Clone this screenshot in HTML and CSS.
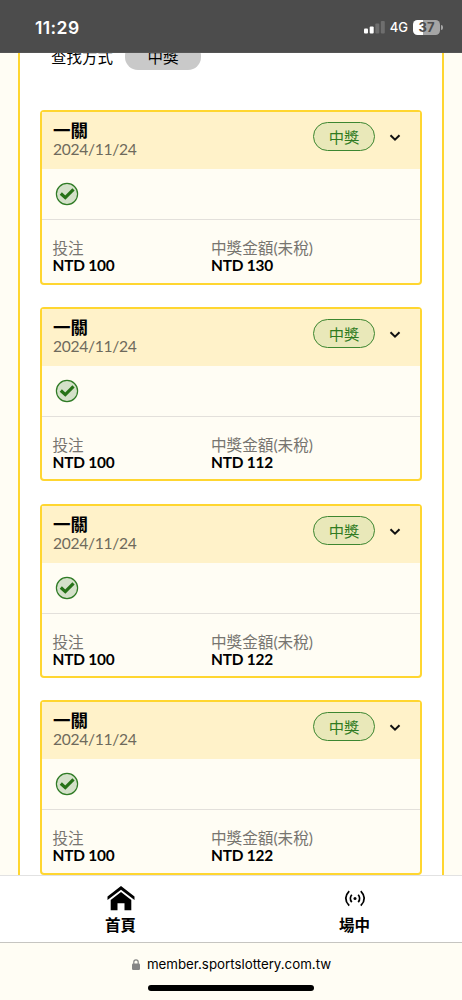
FILE: index.html
```html
<!DOCTYPE html>
<html lang="zh-Hant">
<head>
<meta charset="utf-8">
<meta name="viewport" content="width=device-width, initial-scale=1">
<title>投注紀錄</title>
<link rel="stylesheet" href="styles.css">
</head>
<body>
<header class="status">
  <span class="time">11:29</span>
  <div class="indicators">
    <svg class="signal" width="21" height="14" viewBox="0 0 21 14"><g fill="#fff"><rect x="0" y="8.500" width="4" height="5" rx="1"/><rect x="5.700" y="6.500" width="4" height="7" rx="1"/></g><g fill="#6e6e6e"><rect x="11.300" y="3.500" width="4" height="10" rx="1"/><rect x="16.800" y="1" width="4" height="12.500" rx="1"/></g></svg>
    <span class="network">4G</span>
    <div class="battery"><span class="level">37</span><i class="cap"></i></div>
  </div>
</header>
<main class="page">
  <section class="panel">
    <div class="filter"><span>查找方式</span><span class="chip">中獎</span></div>
    <div class="cards">
      <article class="card">
        <div class="head"><div><h2>一關</h2><p class="date">2024/11/24</p></div><span class="badge">中獎</span><svg class="chevron" width="12" height="8" viewBox="0 0 12 8"><path d="M1.500 1.200L6 5.700L10.500 1.200"/></svg></div>
        <div class="result"><svg class="check" width="24" height="24" viewBox="0 0 24 24"><circle cx="12" cy="12" r="10.600"/><path d="M5.800 11.500L10.300 15.600L18.500 7.300"/></svg></div>
        <div class="amounts"><div class="stake"><p>投注</p><b>NTD 100</b></div><div><p>中獎金額(未稅)</p><b>NTD 130</b></div></div>
      </article>
      <article class="card">
        <div class="head"><div><h2>一關</h2><p class="date">2024/11/24</p></div><span class="badge">中獎</span><svg class="chevron" width="12" height="8" viewBox="0 0 12 8"><path d="M1.500 1.200L6 5.700L10.500 1.200"/></svg></div>
        <div class="result"><svg class="check" width="24" height="24" viewBox="0 0 24 24"><circle cx="12" cy="12" r="10.600"/><path d="M5.800 11.500L10.300 15.600L18.500 7.300"/></svg></div>
        <div class="amounts"><div class="stake"><p>投注</p><b>NTD 100</b></div><div><p>中獎金額(未稅)</p><b>NTD 112</b></div></div>
      </article>
      <article class="card">
        <div class="head"><div><h2>一關</h2><p class="date">2024/11/24</p></div><span class="badge">中獎</span><svg class="chevron" width="12" height="8" viewBox="0 0 12 8"><path d="M1.500 1.200L6 5.700L10.500 1.200"/></svg></div>
        <div class="result"><svg class="check" width="24" height="24" viewBox="0 0 24 24"><circle cx="12" cy="12" r="10.600"/><path d="M5.800 11.500L10.300 15.600L18.500 7.300"/></svg></div>
        <div class="amounts"><div class="stake"><p>投注</p><b>NTD 100</b></div><div><p>中獎金額(未稅)</p><b>NTD 122</b></div></div>
      </article>
      <article class="card">
        <div class="head"><div><h2>一關</h2><p class="date">2024/11/24</p></div><span class="badge">中獎</span><svg class="chevron" width="12" height="8" viewBox="0 0 12 8"><path d="M1.500 1.200L6 5.700L10.500 1.200"/></svg></div>
        <div class="result"><svg class="check" width="24" height="24" viewBox="0 0 24 24"><circle cx="12" cy="12" r="10.600"/><path d="M5.800 11.500L10.300 15.600L18.500 7.300"/></svg></div>
        <div class="amounts"><div class="stake"><p>投注</p><b>NTD 100</b></div><div><p>中獎金額(未稅)</p><b>NTD 122</b></div></div>
      </article>
    </div>
  </section>
</main>
<nav class="tabs">
  <a class="tab"><svg width="28" height="26" viewBox="0 0 28 26"><path d="M14 1L27.500 11.500V15L14 4.800L.5 15V11.500Z"/><path d="M14 7.100L24.300 15V25.300H17.500V18.300H10.500V25.300H3.700V15Z"/></svg><span>首頁</span></a>
  <a class="tab"><svg width="28" height="26" viewBox="0 0 28 26"><circle cx="14" cy="13.400" r="1.500"/><g class="waves"><path d="M10.800 9.700Q7.800 13.400 10.800 17.100M17.200 9.700Q20.200 13.400 17.200 17.100M8.200 6.100Q1.200 13.400 8.200 20.700M19.800 6.100Q26.800 13.400 19.800 20.700"/></g></svg><span>場中</span></a>
</nav>
<footer class="browser">
  <div class="address"><svg width="8" height="11" viewBox="0 0 8 11"><path class="shackle" d="M1.800 5V3.100a2.200 2.200 0 0 1 4.400 0V5"/><rect y="4.500" width="8" height="6.500" rx="1.200"/></svg><span>member.sportslottery.com.tw</span></div>
  <div class="home-bar"></div>
</footer>
</body>
</html>
```
FILE: styles.css
```css
* { box-sizing: border-box; }
body {
  margin: 0;
  width: 462px;
  height: 1000px;
  display: flex;
  flex-direction: column;
  overflow: hidden;
  background: #fffdf4;
  color: #000;
  font-family: Lato, "Noto Sans CJK TC", sans-serif;
}
h2, p { margin: 0; }
svg { display: block; flex: none; }

.status {
  height: 53px;
  flex: none;
  display: flex;
  justify-content: space-between;
  align-items: center;
  padding: 2px 19px 0 35px;
  background: #4c4c4c;
  border-bottom: 1px solid #555;
  color: #fff;
  font-family: Inter, sans-serif;
}
.time { font-size: 17.500px; font-weight: 600; letter-spacing: 0.4px; }
.indicators { display: flex; align-items: center; }
.network { margin: 0 5px 0 5px; font-size: 13px; font-weight: 500; }
.battery { display: flex; align-items: center; gap: 1px; }
.level {
  width: 27px;
  height: 15px;
  border-radius: 4.500px;
  background: linear-gradient(90deg, #fff 37%, #a5a5a5 37%);
  color: #4c4c4c;
  font-size: 13px;
  font-weight: 700;
  line-height: 15px;
  text-align: center;
}
.cap { width: 2px; height: 5px; border-radius: 0 2px 2px 0; background: #a5a5a5; }

.page { flex: 1; min-height: 0; overflow: hidden; padding: 0 18px; }
.panel {
  height: 830px;
  padding: 0 20px;
  background: #fff;
  border: solid #ffd630;
  border-width: 0 2px;
}
.filter {
  height: 57px;
  display: flex;
  align-items: flex-start;
  gap: 12px;
  padding-left: 11px;
  font-size: 15.500px;
  line-height: 28px;
}
.filter span { margin-top: -10px; }
.filter .chip {
  width: 76px;
  height: 26.500px;
  border-radius: 13px;
  background: #c9c9c9;
  text-align: center;
}

.cards { display: flex; flex-direction: column; gap: 22.300px; }
.card {
  height: 174.500px;
  flex: none;
  display: flex;
  flex-direction: column;
  border: 2px solid #ffd630;
  border-radius: 4px;
  background: #fffdf4;
}
.head {
  height: 57px;
  display: flex;
  align-items: flex-start;
  padding: 10px 19px 0 11px;
  background: #fff2c9;
}
.head > div { flex: 1; }
.head h2 { font-size: 17.500px; line-height: 18px; font-weight: 700; }
.date { font-size: 15.600px; line-height: 18px; letter-spacing: -0.3px; color: #6e6a5c; }
.badge {
  width: 62px;
  height: 29px;
  border: 1px solid #3d8630;
  border-radius: 15px;
  background: #e9e8b9;
  color: #307b22;
  font-size: 15.300px;
  line-height: 28px;
  text-align: center;
}
.chevron { margin: 12px 0 0 14px; fill: none; stroke: #111; stroke-width: 2; }
.result {
  height: 51px;
  padding: 13px 0 0 13px;
  border-bottom: 1px solid #e3e0db;
}
.check circle { fill: #d4e1c9; stroke: #2f7b25; stroke-width: 1.200; }
.check path { fill: none; stroke: #267217; stroke-width: 3.200; }
.amounts { display: flex; padding: 20px 0 0 10.500px; }
.amounts p { color: #777570; font-size: 15.600px; line-height: 17px; }
.amounts b { display: block; font-size: 15.400px; line-height: 16px; letter-spacing: -0.2px; }
.stake { width: 158.500px; }

.tabs {
  height: 67px;
  flex: none;
  display: flex;
  padding-left: 4px;
  background: #fff;
  border-top: 1px solid #e2e2e2;
}
.tab {
  flex: 1;
  display: flex;
  flex-direction: column;
  align-items: center;
  padding-top: 9px;
}
.tab:first-child { padding-left: 9px; }
.tab:last-child { padding-left: 19px; }
.tab span { margin-top: 4px; font-size: 15.500px; line-height: 20px; font-weight: 700; }
.waves { fill: none; stroke: #000; stroke-width: 1.700; }

.browser {
  height: 58px;
  flex: none;
  display: flex;
  flex-direction: column;
  align-items: center;
  border-top: 1px solid #c6c5c1;
  font-family: Inter, sans-serif;
}
.address {
  display: flex;
  align-items: center;
  gap: 7px;
  margin-top: 12px;
  padding-left: 1px;
  font-size: 13.300px;
  line-height: 18px;
}
.address svg { fill: #858585; }
.shackle { fill: none; stroke: #858585; stroke-width: 1.200; }
.home-bar { width: 166px; height: 6px; margin-top: 12px; border-radius: 3px; background: #000; }
```
